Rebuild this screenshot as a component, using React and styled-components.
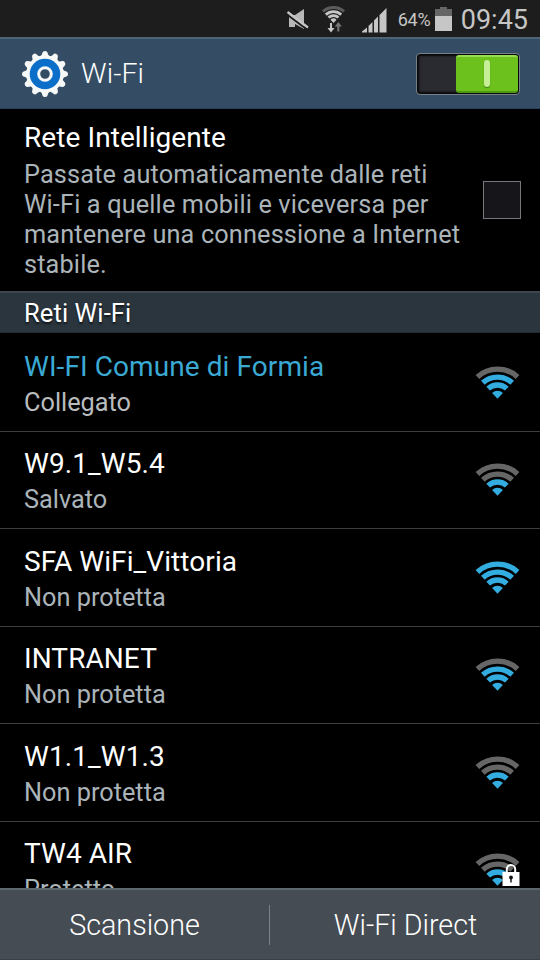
import React from "react";
import styled, { createGlobalStyle } from "styled-components";

const GlobalStyle = createGlobalStyle`
  * {
    box-sizing: border-box;
  }
  body {
    margin: 0;
    background: #000;
    font-family: Roboto, "Liberation Sans", sans-serif;
  }
`;

const Screen = styled.div`
  display: flex;
  flex-direction: column;
  width: 540px;
  height: 960px;
  overflow: hidden;
  background: #000;
  color: #fff;
`;

const StatusBar = styled.div`
  display: flex;
  flex: none;
  align-items: center;
  justify-content: flex-end;
  height: 37px;
  padding-right: 12px;
  background: #1d1d1d;
  color: #c6c6c6;
`;

const StatusIcons = styled.svg`
  display: block;
  width: 110px;
  height: 37px;
`;

const Percent = styled.span`
  width: 32px;
  margin-left: 8px;
  font-size: 18px;
  line-height: 37px;
  letter-spacing: -0.3px;
  padding-top: 2px;
`;

const Battery = styled.svg`
  width: 17px;
  height: 24px;
  margin: 1px 9px 0 5px;
`;

const Clock = styled.span`
  font-size: 27px;
  line-height: 37px;
  padding-top: 4px;
`;

const Header = styled.div`
  display: flex;
  flex: none;
  align-items: center;
  height: 72px;
  padding: 0 20px 0 21px;
  background: #344d65;
  border-top: 2px solid #4d6478;
  border-bottom: 1px solid #28405a;
`;

const Title = styled.h1`
  flex: 1;
  margin: 0 0 0 12px;
  padding-top: 1px;
  font-size: 28.5px;
  font-weight: 300;
  line-height: 36px;
  letter-spacing: 0.1px;
`;

const Toggle = styled.div`
  display: flex;
  justify-content: flex-end;
  width: 104px;
  height: 42px;
  padding: 1px;
  border: 1px solid #76818a;
  border-radius: 4px;
  background: #2a2a31;
  box-shadow: inset 0 0 2px 2px #08080a;
`;

const Knob = styled.div`
  display: flex;
  align-items: center;
  justify-content: center;
  width: 62px;
  height: 38px;
  border-top: 2px solid #98dc50;
  border-bottom: 2px solid #4f9a10;
  border-radius: 3px;
  background: #6cc11c;
`;

const KnobMark = styled.span`
  width: 6px;
  height: 27px;
  border-radius: 3px;
  background: #c5ee96;
  box-shadow: 0 1px 1px #3c800c;
`;

const Setting = styled.div`
  display: flex;
  flex: none;
  align-items: center;
  justify-content: space-between;
  height: 182px;
  padding: 0 19px 0 24px;
`;

const SettingText = styled.div`
  width: 445px;
`;

const Name = styled.div`
  font-size: 28px;
  line-height: 36px;
  letter-spacing: 0.08px;
  color: ${(props) => (props.$active ? "#3aa9d4" : "#fff")};
`;

const Detail = styled.div`
  font-size: 25.3px;
  line-height: 36px;
  color: ${(props) => (props.$active ? "#b9bcbe" : "#abb4b9")};
  white-space: nowrap;
`;

const Description = styled(Detail)`
  margin-top: 4px;
  line-height: 30px;
  letter-spacing: 0.14px;
`;

const Checkbox = styled.div`
  width: 38px;
  height: 38px;
  border: 1px solid #77777b;
  background: #15151a;
`;

const SectionTitle = styled.h2`
  flex: none;
  height: 42px;
  margin: 0;
  padding-left: 24px;
  border-top: 2px solid #3e474f;
  border-bottom: 1px solid #222b32;
  background: #2b353d;
  font-size: 25.5px;
  font-weight: 400;
  line-height: 41px;
  letter-spacing: 0.1px;
  text-shadow: 0 2px 2px #10161a;
`;

const Networks = styled.div`
  flex: 1;
  min-height: 0;
  padding-top: 1px;
  overflow: hidden;
`;

const Network = styled.div`
  display: flex;
  align-items: center;
  justify-content: space-between;
  height: 97.5px;
  padding: 0 21px 0 24px;
  border-bottom: 1px solid #3d3d3d;
`;

const NetworkText = styled.div`
  padding-top: 5px;
`;

const Signal = styled.svg`
  display: block;
  width: 43px;
  height: 33px;
  overflow: visible;
`;

const Footer = styled.div`
  display: flex;
  flex: none;
  align-items: center;
  height: 72px;
  border-top: 2px solid #5b666d;
  border-bottom: 1px solid #394046;
  background: #454c53;
`;

const FooterButton = styled.button`
  flex: 1;
  padding: 0;
  border: 0;
  background: none;
  color: #fff;
  font: 300 28.7px/40px Roboto, "Liberation Sans", sans-serif;
`;

const Divider = styled.span`
  width: 1px;
  height: 40px;
  margin-right: 1px;
  background: #7b8388;
`;

const networks = [
  { name: "WI-FI Comune di Formia", detail: "Collegato", level: 3, active: true },
  { name: "W9.1_W5.4", detail: "Salvato", level: 2 },
  { name: "SFA WiFi_Vittoria", detail: "Non protetta", level: 4 },
  { name: "INTRANET", detail: "Non protetta", level: 3 },
  { name: "W1.1_W1.3", detail: "Non protetta", level: 2 },
  { name: "TW4 AIR", detail: "Protetto", level: 2, locked: true },
];

// arc around the bottom tip of the fan
function arc(cx, cy, r) {
  const dx = r * 0.676;
  const dy = r * 0.737;
  return `M${cx - dx} ${cy - dy}A${r} ${r} 0 0 1 ${cx + dx} ${cy - dy}`;
}

function SignalIcon({ level, locked }) {
  return (
    <Signal viewBox="0 0 43 33">
      <path d={arc(21.5, 32.8, 8) + "L21.5 32.8Z"} fill="#33ace0" />
      {[13.8, 21.7, 29.7].map((r, i) => (
        <path
          key={r}
          d={arc(21.5, 32.8, r)}
          fill="none"
          stroke={level > i + 1 ? "#33ace0" : "#666"}
          strokeWidth="5.4"
        />
      ))}
      {locked && (
        <g>
          <path d="M30.8 20V16.2a4.2 4.2 0 0 1 8.4 0V20" fill="none" stroke="#fff" strokeWidth="2" />
          <rect x="26.5" y="19" width="17" height="14" fill="#fff" />
          <circle cx="35" cy="24.5" r="1.9" fill="#111" />
          <rect x="34.3" y="24" width="1.4" height="5.5" fill="#111" />
        </g>
      )}
    </Signal>
  );
}

function GearIcon() {
  const teeth = Array.from({ length: 12 }, (_, i) => i * 30);
  return (
    <svg width="48" height="48" viewBox="-24 -24 48 48">
      {teeth.map((a) => (
        <path
          key={a}
          d="M-4.5 -17.5Q-3 -19 -2.5 -21.5Q-2 -23 0 -23Q2 -23 2.5 -21.5Q3 -19 4.5 -17.5Z"
          fill="#f7f8f8"
          transform={`rotate(${a})`}
        />
      ))}
      <circle r="18.8" fill="#f7f8f8" />
      <circle r="15.3" fill="#0b6fc9" />
      <circle r="6.3" fill="#344d65" stroke="#f7f8f8" strokeWidth="3" />
    </svg>
  );
}

function App() {
  return (
    <Screen>
      <GlobalStyle />
      <StatusBar>
        <StatusIcons viewBox="280 0 110 37">
          <path d="M289 15h6l9-6v20l-9-5v3h-6z" fill="#b8b8b8" />
          <path d="M286.5 14l20.5 15.5" stroke="#1d1d1d" strokeWidth="2" />
          <path d="M287.5 12l20.5 15.5" stroke="#c6c6c6" strokeWidth="2.2" />
          <path d={arc(333.5, 23, 15.6)} fill="none" stroke="#5c5c5c" strokeWidth="3" />
          <path d={arc(333.5, 23, 11.4)} fill="none" stroke="#c6c6c6" strokeWidth="2.8" />
          <path d={arc(333.5, 23, 7.4)} fill="none" stroke="#c6c6c6" strokeWidth="2.6" />
          <path d={arc(333.5, 23, 4.5) + "L333.5 23Z"} fill="#c6c6c6" />
          <path d="M330 23h2v5h2.5l-3.5 4.5-3.5-4.5h2.5z" fill="#c6c6c6" />
          <path d="M337.3 31.5h2v-5h2.5l-3.5-4.5-3.5 4.5h2.5z" fill="#777" />
          <path
            d="M362 32.5v-1l5-4v5zM368.5 32.5v-6.5l4-4v10.5zM374 32.5v-12l4-4v16zM379.5 32.5v-17.5l7-7v24.5z"
            fill="#c6c6c6"
          />
        </StatusIcons>
        <Percent>64%</Percent>
        <Battery viewBox="0 0 17 24">
          <path d="M5 0h7v2h5v8H0V2h5z" fill="#666" />
          <path d="M0 9h17v15H0z" fill="#c6c6c6" />
        </Battery>
        <Clock>09:45</Clock>
      </StatusBar>
      <Header>
        <GearIcon />
        <Title>Wi-Fi</Title>
        <Toggle>
          <Knob>
            <KnobMark />
          </Knob>
        </Toggle>
      </Header>
      <Setting>
        <SettingText>
          <Name>Rete Intelligente</Name>
          <Description>
            Passate automaticamente dalle reti
            <br />
            Wi-Fi a quelle mobili e viceversa per
            <br />
            mantenere una connessione a Internet
            <br />
            stabile.
          </Description>
        </SettingText>
        <Checkbox />
      </Setting>
      <SectionTitle>Reti Wi-Fi</SectionTitle>
      <Networks>
        {networks.map((n) => (
          <Network key={n.name}>
            <NetworkText>
              <Name $active={n.active}>{n.name}</Name>
              <Detail $active={n.active}>{n.detail}</Detail>
            </NetworkText>
            <SignalIcon level={n.level} locked={n.locked} />
          </Network>
        ))}
      </Networks>
      <Footer>
        <FooterButton>Scansione</FooterButton>
        <Divider />
        <FooterButton>Wi-Fi Direct</FooterButton>
      </Footer>
    </Screen>
  );
}

export default App;
